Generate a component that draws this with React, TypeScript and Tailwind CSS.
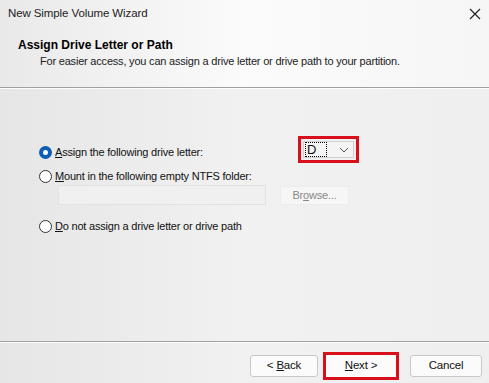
import React from 'react';

const Radio: React.FC<{ checked?: boolean }> = ({ checked }) =>
  checked ? (
    <span className="w-[13px] h-[13px] rounded-full bg-[#0a5fb4] flex items-center justify-center shrink-0">
      <span className="w-[5px] h-[5px] rounded-full bg-white" />
    </span>
  ) : (
    <span className="w-[13px] h-[13px] rounded-full border border-[#333] bg-white shrink-0" />
  );

const App: React.FC = () => {
  return (
    <div
      className="w-[489px] h-[383px] flex flex-col bg-[#f0f0f0] text-[11px] tracking-[-0.2px] text-[#111] overflow-hidden"
      style={{ fontFamily: '"Liberation Sans", Arial, sans-serif' }}
    >
      {/* header */}
      <div className="h-[87px] bg-gradient-to-r from-[#e9e9e9] via-[#fbfbfb] to-[#f6f6f6] flex flex-col">
        <div className="h-[27px] flex items-center justify-between pl-[8px] pr-[6px]">
          <span className="text-[11.5px] tracking-[-0.1px] text-[#222]">New Simple Volume Wizard</span>
          <svg width="14" height="14" viewBox="0 0 14 14" className="mr-[1px]">
            <path d="M2 2 L12 12 M12 2 L2 12" stroke="#222" strokeWidth="1.2" />
          </svg>
        </div>
        <div className="pl-[18px] pt-[11px] font-bold text-[12px] tracking-normal leading-[14px] text-black">
          Assign Drive Letter or Path
        </div>
        <div className="pl-[40px] pt-[2px] text-[11px] leading-[14px] text-[#222]">
          For easier access, you can assign a drive letter or drive path to your partition.
        </div>
      </div>
      <div className="h-[1px] bg-[#a0a0a0]" />
      <div className="h-[1px] bg-[#fdfdfd]" />

      {/* body */}
      <div className="flex-1 flex flex-col pl-[39px] pt-[55px] bg-gradient-to-r from-[#e6e6e6] via-[#f1f1f1] to-[#efefef]">
        <div className="flex items-center h-[16px] gap-[3px]">
          <Radio checked />
          <span className="w-[240px]">
            <span className="underline">A</span>ssign the following drive letter:
          </span>
          <div className="-mt-[5px] border-[3px] border-[#d8101c] p-[2px] w-[61px] h-[27px]">
            <div className="h-full border border-[#d0d0d0] bg-[#f4f4f4] flex items-center pl-[1px] pr-[4px]">
              <span className="border border-dotted border-black w-[22px] h-[15px] leading-[13px] text-[13px] tracking-normal pl-[1px]">
                D
              </span>
              <svg width="10" height="6" viewBox="0 0 10 6" className="ml-auto">
                <path d="M1 1 L5 5 L9 1" fill="none" stroke="#555" strokeWidth="1" />
              </svg>
            </div>
          </div>
        </div>
        <div className="flex items-center h-[16px] gap-[3px] mt-[8px]">
          <Radio />
          <span>
            <span className="underline">M</span>ount in the following empty NTFS folder:
          </span>
        </div>
        <div className="flex items-center mt-[1px] ml-[19px] gap-[14px]">
          <div className="w-[208px] h-[20px] border border-[#e2e2e2] bg-[#f0f0f0]" />
          <div className="w-[69px] h-[19px] bg-[#f6f6f6] border border-[#ececec] text-[#888] flex items-center justify-center">
            Br<span className="underline">o</span>wse...
          </div>
        </div>
        <div className="flex items-center h-[16px] gap-[3px] mt-[13px]">
          <Radio />
          <span>
            <span className="underline">D</span>o not assign a drive letter or drive path
          </span>
        </div>
        <div className="flex-1" />
        <div className="h-[1px] bg-[#a0a0a0] -ml-[39px]" />
        <div className="h-[1px] bg-[#fdfdfd] -ml-[39px]" />
        <div className="h-[40px] flex items-start pt-[12px] -ml-[39px] pl-[250px] pr-[7px] text-[11.5px]">
          <div className="w-[68px] h-[22px] border border-[#c8c8c8] rounded-[3px] bg-[#fbfbfb] flex items-center justify-center">
            &lt; <span className="underline ml-[3px]">B</span>ack
          </div>
          <div className="ml-[5px] -mt-[3px] w-[76px] h-[28px] border-[3px] border-[#d8101c] flex items-center justify-center bg-[#fbfbfb]">
            <span className="underline">N</span>ext &gt;
          </div>
          <div className="ml-auto w-[72px] h-[22px] border border-[#c8c8c8] rounded-[3px] bg-[#fbfbfb] flex items-center justify-center">
            Cancel
          </div>
        </div>
      </div>
    </div>
  );
};

export default App;
